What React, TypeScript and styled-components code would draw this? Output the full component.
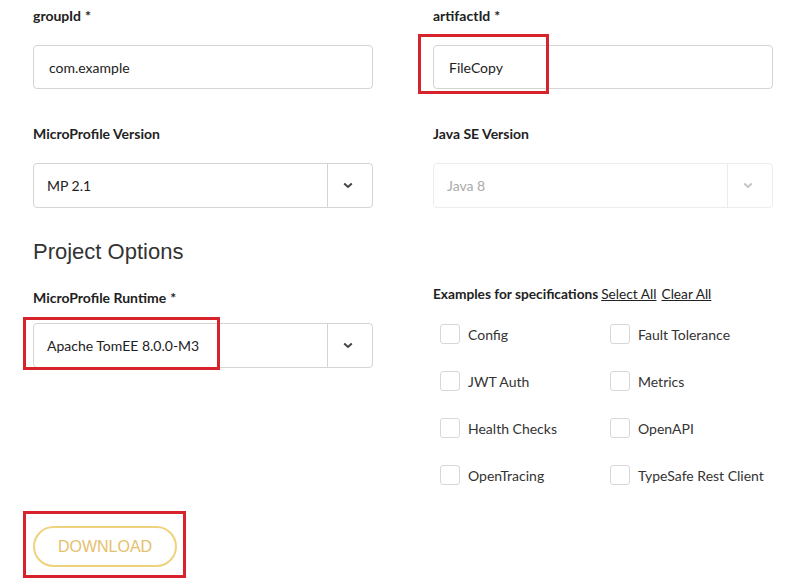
import styled, { createGlobalStyle } from "styled-components";

const GlobalStyle = createGlobalStyle`
  html, body {
    margin: 0;
    padding: 0;
    background: #ffffff;
  }

  body {
    font-family: Lato, "Open Sans", sans-serif;
    color: #333;
  }
`;

const Page = styled.main`
  width: 800px;
  height: 587px;
  box-sizing: border-box;
  padding: 6px 27px 0 33px;
  overflow: hidden;
`;

const Row = styled.div<{ $top?: number }>`
  display: grid;
  grid-template-columns: 340px 340px;
  column-gap: 60px;
  margin-top: ${(p) => p.$top ?? 0}px;
`;

const Field = styled.div<{ $gap?: number }>`
  display: flex;
  flex-direction: column;
  gap: ${(p) => p.$gap ?? 19}px;
`;

const Label = styled.label`
  font-size: 14px;
  font-weight: 700;
  line-height: 20px;
  color: #222;

  span {
    margin-left: 4px;
  }
`;

const Anchor = styled.div`
  position: relative;
`;

const Highlight = styled.div<{ $l: number; $t: number; $w: number; $h: number }>`
  position: absolute;
  left: ${(p) => p.$l}px;
  top: ${(p) => p.$t}px;
  width: ${(p) => p.$w}px;
  height: ${(p) => p.$h}px;
  box-sizing: border-box;
  border: 3px solid #d7242c;
  pointer-events: none;
`;

const TextInput = styled.div`
  box-sizing: border-box;
  height: 44px;
  display: flex;
  align-items: center;
  padding: 0 15px;
  border: 1px solid #d4d4d4;
  border-radius: 4px;
  font-size: 14px;
  color: #222;
`;

const Select = styled.div<{ $disabled?: boolean }>`
  box-sizing: border-box;
  height: 45px;
  display: flex;
  align-items: stretch;
  border: 1px solid ${(p) => (p.$disabled ? "#ececec" : "#d4d4d4")};
  border-radius: 4px;
  font-size: 14px;
  color: ${(p) => (p.$disabled ? "#aaa" : "#222")};
`;

const SelectValue = styled.div`
  flex: 1;
  display: flex;
  align-items: center;
  padding: 0 13px;
`;

const SelectToggle = styled.div<{ $disabled?: boolean }>`
  box-sizing: border-box;
  width: 45px;
  display: flex;
  align-items: center;
  justify-content: center;
  padding-right: 4px;
  border-left: 1px solid ${(p) => (p.$disabled ? "#ececec" : "#d4d4d4")};
  color: ${(p) => (p.$disabled ? "#c4c4c4" : "#444")};
`;

const Heading = styled.h2`
  margin: 31px 0 0;
  font-family: "Liberation Sans", Arial, sans-serif;
  font-size: 22px;
  font-weight: 400;
  line-height: 26px;
  color: #333;
`;

const SpecHeader = styled.div`
  font-size: 13.7px;
  line-height: 20px;
  margin-top: -4px;
  color: #222;

  b {
    font-weight: 700;
    margin-right: 3px;
  }
`;

const TextLink = styled.a`
  color: #222;
  text-decoration: underline;
  margin-right: 5px;
  cursor: pointer;
`;

const SpecGrid = styled.div`
  display: grid;
  grid-template-columns: 170px 170px;
  row-gap: 27px;
  padding-left: 7px;
  margin-top: 20px;
`;

const Check = styled.label`
  display: flex;
  align-items: center;
  gap: 8px;
  font-size: 14px;
  color: #333;
  height: 20px;
`;

const Box = styled.span`
  width: 20px;
  height: 20px;
  box-sizing: border-box;
  border: 1px solid #d8d8d8;
  border-radius: 3px;
  flex-shrink: 0;
`;

const Actions = styled.div`
  margin-top: 41px;
`;

const DownloadButton = styled.button`
  width: 144px;
  height: 41px;
  border: 2px solid #efd27e;
  border-radius: 21px;
  background: #fff;
  font-family: "Liberation Sans", Arial, sans-serif;
  font-size: 16px;
  color: #e5c06c;
  cursor: pointer;
`;

const Chevron = () => (
  <svg width="10" height="7" viewBox="0 0 10 7" fill="none">
    <path d="M1.2 1.5 L5 5 L8.8 1.5" stroke="currentColor" strokeWidth="2" />
  </svg>
);

const specs = [
  "Config",
  "Fault Tolerance",
  "JWT Auth",
  "Metrics",
  "Health Checks",
  "OpenAPI",
  "OpenTracing",
  "TypeSafe Rest Client",
];

export default function App() {
  return (
    <>
      <GlobalStyle />
      <Page>
        <Row>
          <Field>
            <Label>
              groupId<span>*</span>
            </Label>
            <TextInput>com.example</TextInput>
          </Field>
          <Field>
            <Label>
              artifactId<span>*</span>
            </Label>
            <Anchor>
              <TextInput>FileCopy</TextInput>
              <Highlight $l={-15} $t={-11} $w={131} $h={60} />
            </Anchor>
          </Field>
        </Row>

        <Row $top={35}>
          <Field>
            <Label>MicroProfile Version</Label>
            <Select>
              <SelectValue>MP 2.1</SelectValue>
              <SelectToggle>
                <Chevron />
              </SelectToggle>
            </Select>
          </Field>
          <Field>
            <Label>Java SE Version</Label>
            <Select $disabled>
              <SelectValue>Java 8</SelectValue>
              <SelectToggle $disabled>
                <Chevron />
              </SelectToggle>
            </Select>
          </Field>
        </Row>

        <Heading>Project Options</Heading>

        <Row $top={23}>
          <Field $gap={15}>
            <Label>
              MicroProfile Runtime<span>*</span>
            </Label>
            <Anchor>
              <Select>
                <SelectValue>Apache TomEE 8.0.0-M3</SelectValue>
                <SelectToggle>
                  <Chevron />
                </SelectToggle>
              </Select>
              <Highlight $l={-10} $t={-6} $w={197} $h={53} />
            </Anchor>
          </Field>
          <div>
            <SpecHeader>
              <b>Examples for specifications</b>
              <TextLink>Select All</TextLink>
              <TextLink>Clear All</TextLink>
            </SpecHeader>
            <SpecGrid>
              {specs.map((s) => (
                <Check key={s}>
                  <Box />
                  {s}
                </Check>
              ))}
            </SpecGrid>
          </div>
        </Row>

        <Actions>
          <Anchor>
            <DownloadButton>DOWNLOAD</DownloadButton>
            <Highlight $l={-10} $t={-15} $w={163} $h={67} />
          </Anchor>
        </Actions>
      </Page>
    </>
  );
}
